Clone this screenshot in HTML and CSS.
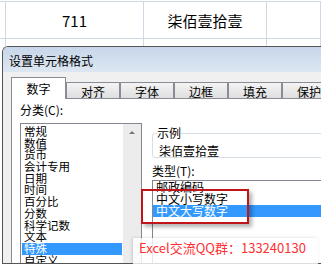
FILE: index.html
```html
<!DOCTYPE html>
<html lang="zh-CN">
<head>
  <meta charset="UTF-8">
  <title>设置单元格格式</title>
  <link rel="stylesheet" href="styles.css">
</head>
<body>

  <div class="sheet">
    <div class="cell"></div>
    <div class="cell">711</div>
    <div class="cell">柒佰壹拾壹</div>
    <div class="cell"></div>
    <div class="cell"></div>
    <div class="cell"></div>
    <div class="cell"></div>
    <div class="cell"></div>
  </div>

  <div class="dialog">
    <div class="title">设置单元格格式</div>
    <div class="body">
      <div class="tabs">
        <div class="tab active">数字</div>
        <div class="tab">对齐</div>
        <div class="tab">字体</div>
        <div class="tab">边框</div>
        <div class="tab">填充</div>
        <div class="tab">保护</div>
      </div>
      <div class="panel">
        <div class="left">
          <div class="label">分类(<u>C</u>):</div>
          <div class="list">
            <ul class="items">
              <li>常规</li>
              <li>数值</li>
              <li>货币</li>
              <li>会计专用</li>
              <li>日期</li>
              <li>时间</li>
              <li>百分比</li>
              <li>分数</li>
              <li>科学记数</li>
              <li>文本</li>
              <li class="sel">特殊</li>
              <li>自定义</li>
            </ul>
            <div class="scroll"><span class="arrow"></span></div>
          </div>
        </div>
        <div class="right">
          <fieldset class="sample">
            <legend>示例</legend>
            <div class="sample-text">柒佰壹拾壹</div>
          </fieldset>
          <div class="label type-label">类型(<u>T</u>):</div>
          <ul class="types">
            <li>邮政编码</li>
            <li>中文小写数字</li>
            <li class="sel">中文大写数字</li>
          </ul>
        </div>
      </div>
    </div>
  </div>

  <div class="callout"></div>
  <div class="qq">Excel交流QQ群：133240130</div>

</body>
</html>
```

FILE: styles.css
```css
html, body { margin: 0; padding: 0; }
body { width: 321px; height: 264px; overflow: hidden; position: relative; background: #fff; font-family: "Noto Sans CJK SC", sans-serif; font-size: 12px; color: #000; }
ul { list-style: none; margin: 0; padding: 0; }

/* spreadsheet behind the dialog */
.sheet { display: grid; grid-template-columns: 6px 138px 123px 1fr; grid-template-rows: 37px 7px; margin-top: 1px; border-top: 1px solid #d0d7e5; }
.cell { border-right: 1px solid #d0d7e5; display: flex; align-items: center; justify-content: center; font-size: 15px; }
.cell:nth-child(-n+4) { border-bottom: 1px solid #d0d7e5; }

/* dialog */
.dialog { margin-left: 2px; width: 420px; height: 218px; border: 1px solid #555; border-right: none; border-radius: 6px 0 0 0; overflow: hidden; box-sizing: border-box; background: #f0f0f0; }
.title { height: 25px; box-sizing: border-box; padding: 4px 0 0 6px; line-height: 20px; background: linear-gradient(#c7d6e9, #dde7f2); }
.body { padding-top: 5px; }

.tabs { display: flex; align-items: flex-end; height: 21px; margin-left: 8px; }
.tab { width: 54px; height: 16px; box-sizing: border-box; border: 1px solid #898c95; border-bottom: none; padding-top: 2px; line-height: 13px; text-align: center; background: linear-gradient(#f4f4f4, #dedede); }
.tab.active { width: 55px; height: 22px; margin-bottom: -1px; padding-top: 0; line-height: 21px; background: #fff; position: relative; z-index: 1; }

.panel { display: flex; margin-left: 8px; height: 200px; padding: 5px 0 0 8px; background: #fff; border-top: 1px solid #898c95; border-left: 1px solid #898c95; }
.label { line-height: 12px; height: 12px; }
.label u { text-decoration: none; }
.left .label { margin-bottom: 7px; }

.list { display: flex; width: 122px; height: 160px; box-sizing: border-box; border: 1px solid #828790; }
.items { flex: 1; padding: 2px 1px 0 1px; font-size: 11.5px; }
.items li { line-height: 11.7px; height: 11.7px; padding-left: 2px; white-space: nowrap; }
.sel { background: #3399ff; color: #fff; }
.scroll { width: 18px; background: #ececec; display: flex; justify-content: center; }
.arrow { width: 0; height: 0; margin-top: 7px; border-left: 3px solid transparent; border-right: 3px solid transparent; border-bottom: 3px solid #777; }

.right { flex: 1; margin-left: 10px; }
.sample { margin: 23px 0 0; padding: 0 4px; border: 1px solid #d5dfe5; border-radius: 3px; }
.sample legend { padding: 0; line-height: 12px; }
.sample-text { line-height: 12px; margin: 6px 0 0 2px; }
.type-label { margin: 7px 0 3px; }
.types { height: 87px; box-sizing: border-box; border: 1px solid #828790; }
.types li { line-height: 12px; height: 12px; padding-left: 3px; white-space: nowrap; }

/* annotations pasted over the screenshot */
.callout { position: absolute; left: 141px; top: 189px; width: 108px; height: 35px; box-sizing: border-box; border: 2px solid #c0141b; box-shadow: 3px 3px 4px rgba(0, 0, 0, .3); }
.qq { position: absolute; left: 133px; top: 238px; height: 26px; padding: 0 12px 0 6px; line-height: 20px; font-size: 13px; white-space: nowrap; color: #ff3030; background: rgba(255, 255, 255, .8); box-shadow: -1px 0 3px rgba(0, 0, 0, .15); }
```
